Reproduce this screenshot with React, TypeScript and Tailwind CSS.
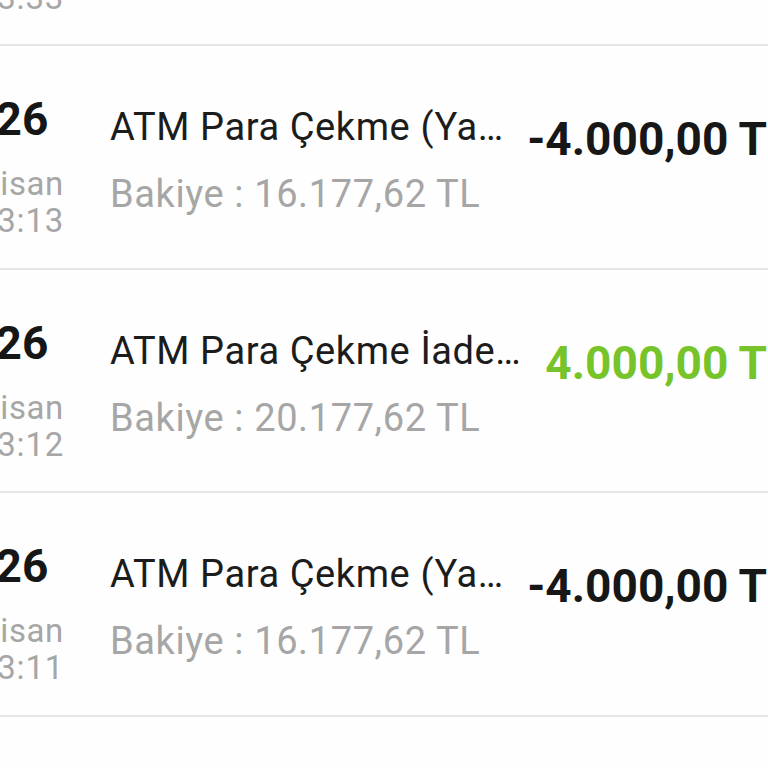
type Tx = {
  day: string;
  month: string;
  time: string;
  title: string;
  balance: string;
  amount: string;
  incoming: boolean;
};

// titles are shown already shortened, the way the app cuts them
const rows: Tx[] = [
  { day: '26', month: 'Nisan', time: '13:33', title: 'ATM Para Çekme (Ya…', balance: '20.177,62 TL', amount: '-4.000,00 TL', incoming: false },
  { day: '26', month: 'Nisan', time: '13:13', title: 'ATM Para Çekme (Ya…', balance: '16.177,62 TL', amount: '-4.000,00 TL', incoming: false },
  { day: '26', month: 'Nisan', time: '13:12', title: 'ATM Para Çekme İade…', balance: '20.177,62 TL', amount: '4.000,00 TL', incoming: true },
  { day: '26', month: 'Nisan', time: '13:11', title: 'ATM Para Çekme (Ya…', balance: '16.177,62 TL', amount: '-4.000,00 TL', incoming: false },
  { day: '26', month: 'Nisan', time: '13:10', title: 'ATM Para Çekme İade…', balance: '20.177,62 TL', amount: '4.000,00 TL', incoming: true },
];

function Row({ tx }: { tx: Tx }) {
  return (
    <div className="flex h-[223.5px] shrink-0 items-start border-b-2 border-[#e6e6e6]">
      <div className="ml-[-30px] flex w-[100px] shrink-0 flex-col items-center pt-[46px]">
        <span className="ml-[4px] text-[46px] font-bold leading-[54px] text-[#161616]">{tx.day}</span>
        <span className="mt-[19px] whitespace-nowrap text-[33px] leading-[37px] tracking-[0.6px] text-[#a6a6a6]">{tx.month}</span>
        <span className="ml-[2px] whitespace-nowrap text-[33px] leading-[37px] tracking-[0.8px] text-[#a6a6a6]">{tx.time}</span>
      </div>
      <div className="ml-[40px] flex w-[416px] shrink-0 flex-col pt-[58px]">
        <span className="truncate text-[38px] leading-[46px] tracking-[0.6px] text-[#1c1c1c]">{tx.title}</span>
        <span className="mt-[21px] whitespace-nowrap text-[38px] leading-[46px] tracking-[0.6px] text-[#a6a6a6]">
          Bakiye : {tx.balance}
        </span>
      </div>
      <div
        className={
          tx.incoming
            ? 'mr-[-24px] flex-1 whitespace-nowrap pt-[66px] text-right text-[46px] font-bold leading-[54px] text-[#77c42a]'
            : 'mr-[-24px] flex-1 whitespace-nowrap pt-[66px] text-right text-[46px] font-bold leading-[54px] text-[#171717]'
        }
      >
        {tx.amount}
      </div>
    </div>
  );
}

export default function App() {
  return (
    <div className="h-[768px] w-[768px] overflow-hidden bg-[#fefefe] font-['Roboto',sans-serif]">
      <div className="mt-[-177.5px] flex flex-col">
        {rows.map((tx, i) => (
          <Row key={i} tx={tx} />
        ))}
      </div>
    </div>
  );
}
